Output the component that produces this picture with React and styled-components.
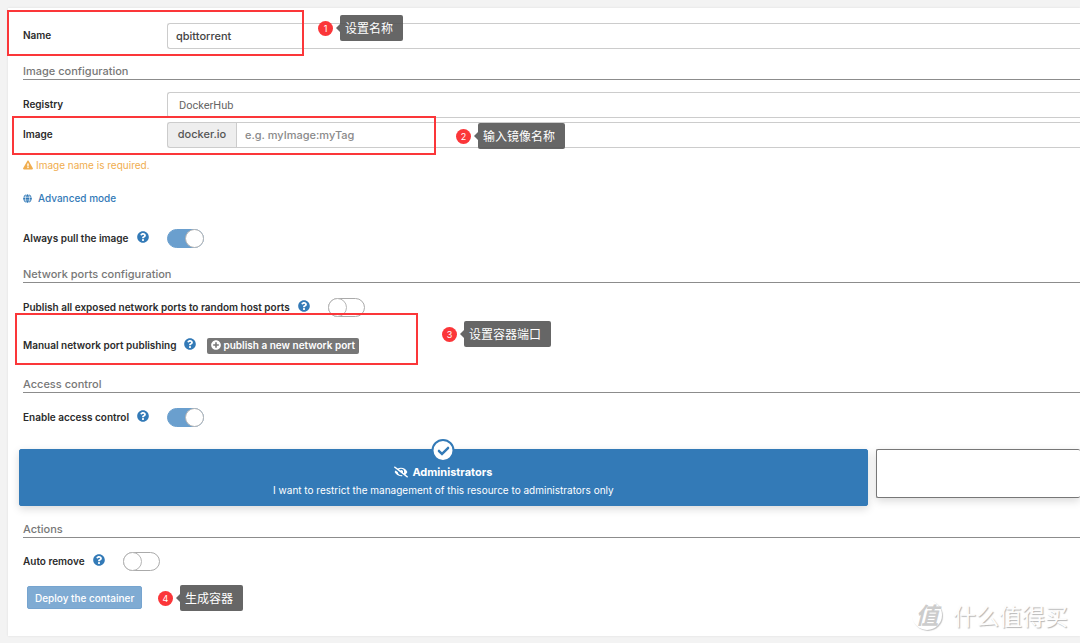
import React, { useState } from 'react';
import styled, { createGlobalStyle } from 'styled-components';
import {
  FaCheck,
  FaExclamationTriangle,
  FaEyeSlash,
  FaGlobe,
  FaPlusCircle,
  FaQuestionCircle,
} from 'react-icons/fa';

const BLUE = '#337ab7';
const RED = '#fb3639';

const GlobalStyle = createGlobalStyle`
  *, *::before {
    box-sizing: border-box;
  }
  body {
    margin: 0;
    background-color: #f3f3f3;
    color: #333;
    font: 10px/14px Inter, 'Noto Sans CJK SC', sans-serif;
  }
  input, select, button {
    font-family: inherit;
  }
`;

const Page = styled.main`
  padding: 8px 0 7px 8px;
  overflow: hidden;
`;

const Panel = styled.form`
  display: flex;
  flex-direction: column;
  padding: 15px 0 27px 15px;
  background-color: white;
  box-shadow: 0 0 2px #ddd;
  position: relative;
`;

const SectionTitle = styled.h2`
  margin: ${(p) => p.$gap}px 0 0;
  height: 19px;
  border-bottom: 1px solid #8c8c8c;
  color: #777;
  font-size: 11px;
  font-weight: 500;
  line-height: 20px;
`;

const Row = styled.div`
  display: flex;
  align-items: center;
  min-height: 19px;
  margin-top: ${(p) => p.$gap || 0}px;
  position: relative;
`;

const Label = styled.label`
  margin-bottom: 2px;
  color: #2b2b2b;
  font-weight: 600;
  white-space: nowrap;
`;

const FieldLabel = styled(Label)`
  flex: 0 0 144px;
`;

const Field = styled.input`
  flex: 1;
  min-width: 0;
  height: 26px;
  padding: 0 8px;
  border: 1px solid #ccc;
  border-right: 0;
  border-radius: ${(p) => (p.$joined ? '0' : '3px 0 0 3px')};
  background-color: white;
  color: #444;
  font-size: 11px;
  font-weight: 500;
  &::placeholder {
    color: #8a8a8a;
    opacity: 1;
  }
`;

const Select = styled.select`
  flex: 1;
  min-width: 0;
  height: 26px;
  padding: 0 11px;
  appearance: none;
  border: 1px solid #ccc;
  border-right: 0;
  border-radius: 3px 0 0 3px;
  background-color: white;
  color: #666;
  font-family: Roboto, sans-serif;
  font-size: 11px;
`;

const Addon = styled.span`
  flex: 0 0 69px;
  height: 26px;
  border: 1px solid #ccc;
  border-right: 0;
  border-radius: 3px 0 0 3px;
  background-color: #eee;
  color: #555;
  font-size: 11px;
  font-weight: 500;
  line-height: 22px;
  text-align: center;
`;

const Warning = styled.p`
  display: flex;
  align-items: center;
  gap: 3px;
  margin: 10px 0 0;
  color: #f0ad4e;
`;

const ModeLink = styled.a`
  display: flex;
  align-items: center;
  align-self: flex-start;
  gap: 6px;
  margin-top: 19px;
  color: ${BLUE};
  font-weight: 500;
  text-decoration: none;
`;

const Help = styled(FaQuestionCircle)`
  flex: none;
  width: 12px;
  height: 12px;
  margin: 0 0 3px 8px;
  color: ${BLUE};
`;

const Switch = styled.input`
  appearance: none;
  flex: none;
  width: 37px;
  height: 19px;
  margin: 0 0 0 18px;
  border: 1px solid #aaa;
  border-radius: 10px;
  background-color: white;
  cursor: pointer;
  &::before {
    content: '';
    display: block;
    width: 19px;
    height: 19px;
    margin: -1px;
    border: 1px solid #b5b5b5;
    border-radius: 50%;
    background-color: white;
  }
  &:checked {
    border-color: #6a9fce;
    background-color: #6a9fce;
  }
  &:checked::before {
    margin-left: 17px;
  }
`;

const PublishButton = styled.button`
  display: flex;
  align-items: center;
  gap: 2px;
  height: 16px;
  margin-left: 11px;
  padding: 0 4px 1px;
  border: 0;
  border-radius: 2px;
  background-color: #777;
  color: white;
  font-size: 10px;
  font-weight: 600;
  white-space: nowrap;
  cursor: pointer;
`;

const Choices = styled.div`
  display: flex;
  align-items: flex-start;
  gap: 8px;
  margin: 22px 0 0 -4px;
`;

const Choice = styled.label`
  flex: ${(p) => (p.$wide ? '0 0 80%' : '1')};
  min-height: 49px;
  padding: ${(p) => (p.$wide ? '14px 0 7px' : '0')};
  border: 1px solid ${(p) => (p.$wide ? BLUE : '#777')};
  border-right-width: ${(p) => (p.$wide ? '1px' : '0')};
  border-radius: 2px;
  background-color: ${(p) => (p.$wide ? BLUE : 'white')};
  box-shadow: 0 3px 8px rgba(0, 0, 0, 0.15);
  color: white;
  line-height: 16px;
  text-align: center;
  position: relative;
  cursor: pointer;
`;

const HiddenRadio = styled.input`
  position: absolute;
  opacity: 0;
`;

const ChoiceTitle = styled.div`
  display: flex;
  align-items: center;
  justify-content: center;
  gap: 4px;
  margin-bottom: 2px;
  font-size: 11px;
  font-weight: 700;
`;

const CheckMark = styled.span`
  display: flex;
  align-items: center;
  justify-content: center;
  width: 23px;
  height: 23px;
  border: 2px solid ${BLUE};
  border-radius: 50%;
  background-color: white;
  color: ${BLUE};
  position: absolute;
  top: -11px;
  left: 50%;
  transform: translateX(-50%);
`;

const DeployButton = styled.button`
  height: 23px;
  padding: 0 7px;
  margin-left: 4px;
  border: 1px solid #76a4cf;
  border-radius: 2px;
  background-color: #7fabd3;
  color: white;
  font-size: 10px;
  font-weight: 500;
  white-space: nowrap;
`;

// red frame drawn over the form
const Highlight = styled.div`
  width: ${(p) => p.$width}px;
  height: ${(p) => p.$height}px;
  border: 2px solid ${RED};
  position: absolute;
  left: ${(p) => p.$left}px;
  top: ${(p) => p.$top}px;
  pointer-events: none;
`;

const Note = styled.div`
  display: flex;
  align-items: center;
  position: absolute;
  left: ${(p) => p.$left}px;
  top: ${(p) => p.$top}px;
`;

const NoteNumber = styled.span`
  width: 15px;
  height: 15px;
  margin-right: 3px;
  border-radius: 50%;
  background-color: ${RED};
  color: white;
  font-size: 9px;
  line-height: 15px;
  text-align: center;
`;

const NoteText = styled.span`
  height: 26px;
  padding: 0 10px 0 5px;
  border-radius: 2px;
  background-color: rgba(85, 85, 85, 0.9);
  color: white;
  font-family: 'Noto Sans CJK SC', sans-serif;
  font-size: 12px;
  line-height: 26px;
  white-space: nowrap;
`;

const NoteArrow = styled.span`
  border: 4px solid transparent;
  border-left-width: 0;
  border-right-color: #666;
`;

const Watermark = styled.div`
  display: flex;
  align-items: center;
  gap: 11px;
  position: absolute;
  right: 12px;
  bottom: 5px;
  color: #fdfdfd;
  font-family: 'Noto Sans CJK SC', sans-serif;
  font-size: 23px;
  line-height: 32px;
  text-shadow: 1px 1px 1px #b5b5b5;
  pointer-events: none;
`;

const WatermarkLogo = styled.span`
  width: 30px;
  height: 30px;
  border-radius: 50%;
  box-shadow: 1px 1px 1px #c4c4c4;
  color: #ccc;
  font-weight: 700;
  font-style: italic;
  line-height: 28px;
  text-align: center;
  text-shadow: none;
`;

function Callout({ number, text, left, top }) {
  return (
    <Note $left={left} $top={top}>
      <NoteNumber>{number}</NoteNumber>
      <NoteArrow />
      <NoteText>{text}</NoteText>
    </Note>
  );
}

function SwitchRow({ id, label, gap, defaultChecked }) {
  return (
    <Row $gap={gap}>
      <Label htmlFor={id}>{label}</Label>
      <Help />
      <Switch type="checkbox" id={id} defaultChecked={defaultChecked} />
    </Row>
  );
}

function App() {
  const [name, setName] = useState('qbittorrent');

  return (
    <Page>
      <GlobalStyle />
      <Panel onSubmit={(e) => e.preventDefault()}>
        <Row>
          <FieldLabel htmlFor="name">Name</FieldLabel>
          <Field
            id="name"
            value={name}
            onChange={(e) => setName(e.target.value)}
          />
          <Highlight $left={-16} $top={-13} $width={297} $height={46} />
          <Callout number={1} text="设置名称" left={295} top={-8} />
        </Row>

        <SectionTitle $gap={12}>Image configuration</SectionTitle>
        <Row $gap={12}>
          <FieldLabel htmlFor="registry">Registry</FieldLabel>
          <Select id="registry">
            <option>DockerHub</option>
          </Select>
        </Row>
        <Row $gap={4}>
          <FieldLabel htmlFor="image">Image</FieldLabel>
          <Addon>docker.io</Addon>
          <Field id="image" placeholder="e.g. myImage:myTag" $joined />
          <Highlight $left={-11} $top={-6} $width={424} $height={39} />
          <Callout number={2} text="输入镜像名称" left={433} top={1} />
        </Row>
        <Warning>
          <FaExclamationTriangle />
          Image name is required.
        </Warning>
        <ModeLink href="#advanced">
          <FaGlobe size={9} />
          Advanced mode
        </ModeLink>
        <SwitchRow
          id="pull"
          label="Always pull the image"
          gap={24}
          defaultChecked
        />

        <SectionTitle $gap={16}>Network ports configuration</SectionTitle>
        <SwitchRow
          id="publishAll"
          label="Publish all exposed network ports to random host ports"
          gap={15}
        />
        <Row $gap={19}>
          <Label as="span">Manual network port publishing</Label>
          <Help />
          <PublishButton type="button">
            <FaPlusCircle />
            publish a new network port
          </PublishButton>
          <Highlight $left={-8} $top={-23} $width={403} $height={52} />
          <Callout number={3} text="设置容器端口" left={419} top={-15} />
        </Row>

        <SectionTitle $gap={19}>Access control</SectionTitle>
        <SwitchRow
          id="access"
          label="Enable access control"
          gap={15}
          defaultChecked
        />
        <Choices>
          <Choice $wide>
            <HiddenRadio type="radio" name="owner" defaultChecked />
            <CheckMark>
              <FaCheck size={12} />
            </CheckMark>
            <ChoiceTitle>
              <FaEyeSlash size={14} />
              Administrators
            </ChoiceTitle>
            I want to restrict the management of this resource to administrators
            only
          </Choice>
          <Choice>
            <HiddenRadio type="radio" name="owner" aria-label="Restricted" />
          </Choice>
        </Choices>

        <SectionTitle $gap={13}>Actions</SectionTitle>
        <SwitchRow id="autoRemove" label="Auto remove" gap={14} />
        <Row $gap={15}>
          <DeployButton type="submit">Deploy the container</DeployButton>
          <Callout number={4} text="生成容器" left={135} top={-1} />
        </Row>
        <Watermark>
          <WatermarkLogo>值</WatermarkLogo>
          什么值得买
        </Watermark>
      </Panel>
    </Page>
  );
}

export default App;
